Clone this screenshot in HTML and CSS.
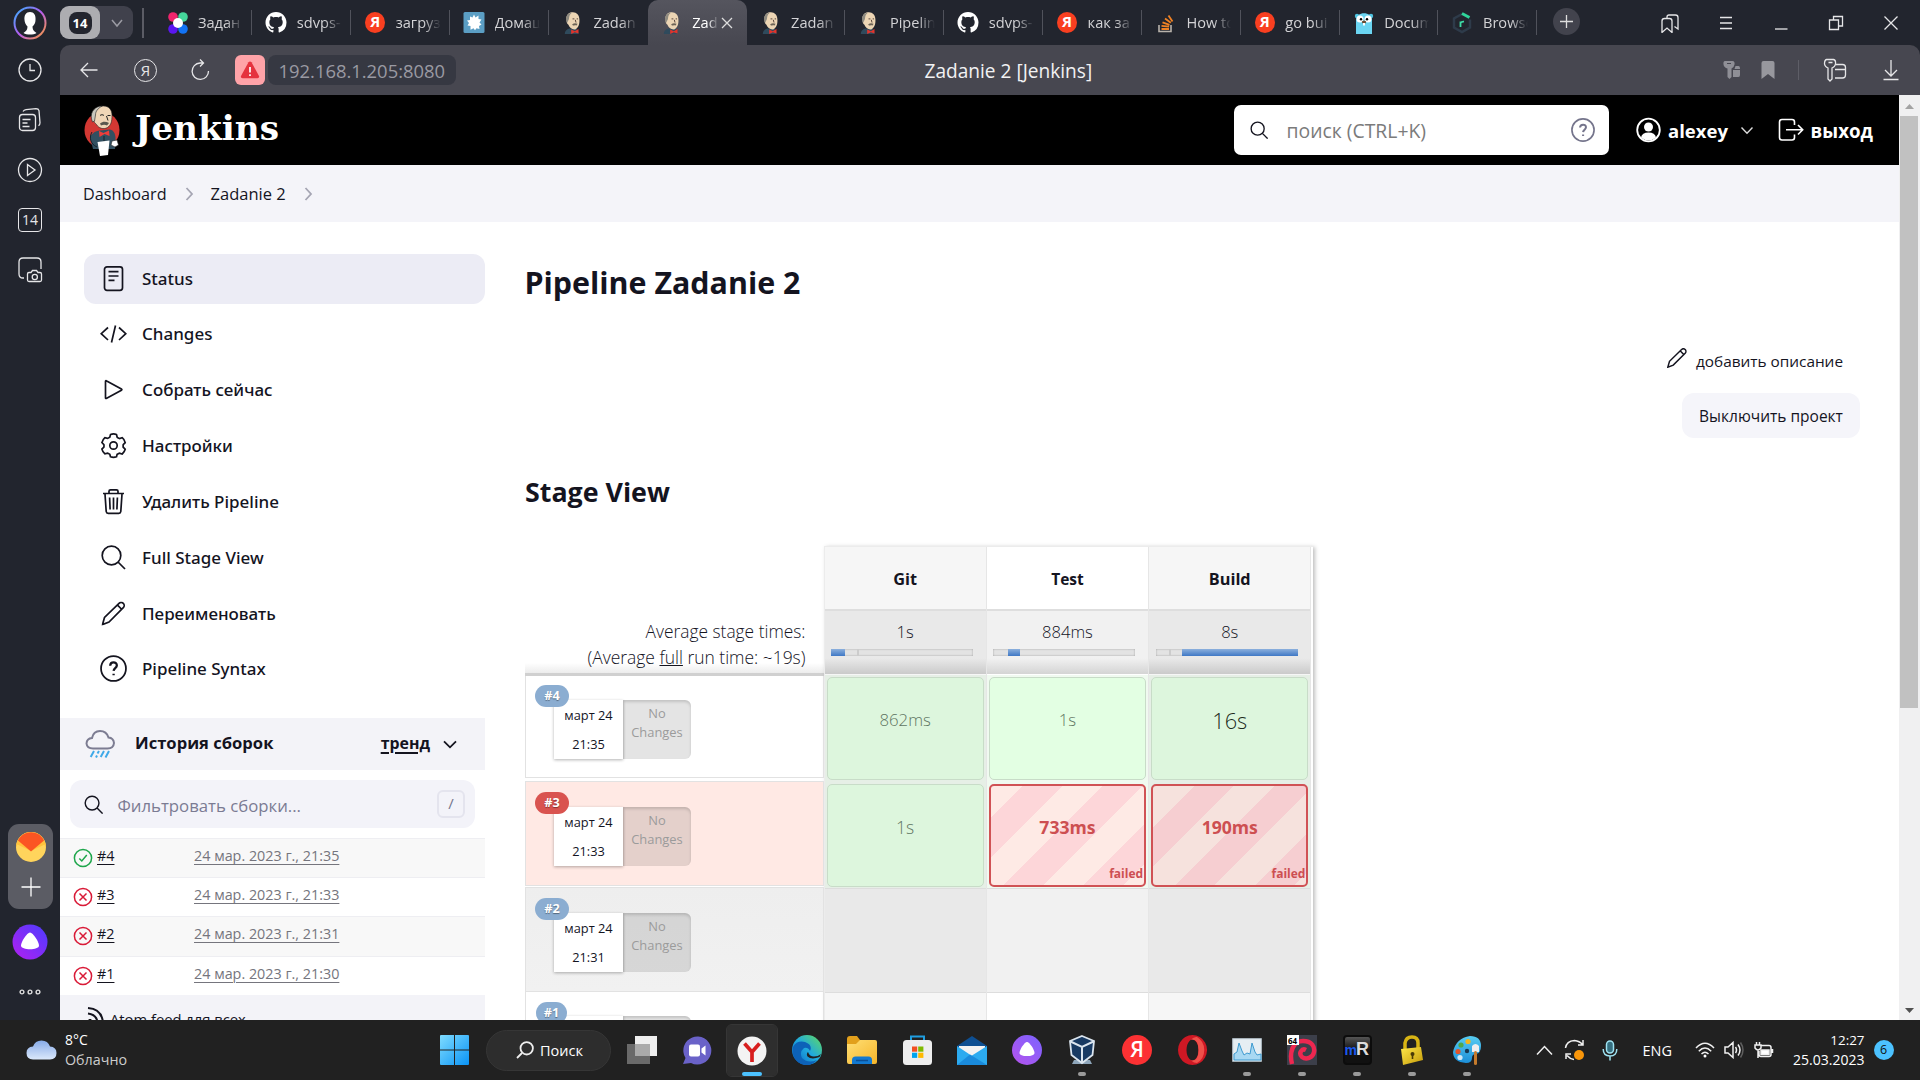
FILE: index.html
```
<!DOCTYPE html>
<html lang="ru">
<head>
<meta charset="utf-8">
<title>Zadanie 2 [Jenkins]</title>
<link rel="stylesheet" href="styles.css">
</head>
<body>
<svg class="defs" aria-hidden="true">
  <defs>
    <linearGradient id="ring" x1="0" y1="0" x2="1" y2="1"><stop offset="0" stop-color="#2fb4ff"/><stop offset=".5" stop-color="#b45cf0"/><stop offset="1" stop-color="#ff9d2f"/></linearGradient>
    <linearGradient id="win" x1="0" y1="0" x2="1" y2="1"><stop offset="0" stop-color="#7fdcff"/><stop offset="1" stop-color="#0a93f5"/></linearGradient>
    <linearGradient id="purple" x1="1" y1="0" x2="0" y2="1"><stop offset="0" stop-color="#4b3cff"/><stop offset="1" stop-color="#b41ff0"/></linearGradient>
    <linearGradient id="alice" x1="1" y1="0" x2="0" y2="1"><stop offset="0" stop-color="#7a63ff"/><stop offset="1" stop-color="#b653ec"/></linearGradient>
    <linearGradient id="cloud" x1="0" y1="0" x2="0" y2="1"><stop offset="0" stop-color="#87abe8"/><stop offset="1" stop-color="#dbe8fb"/></linearGradient>
    <linearGradient id="edge" x1="0" y1="1" x2="1" y2="0"><stop offset="0" stop-color="#0b5fc0"/><stop offset=".5" stop-color="#1fa9df"/><stop offset="1" stop-color="#63dc5c"/></linearGradient>
    <linearGradient id="folder" x1="0" y1="0" x2="1" y2="1"><stop offset="0" stop-color="#ffdf75"/><stop offset="1" stop-color="#f5b52a"/></linearGradient>
    <linearGradient id="paint" x1="0" y1="0" x2="0" y2="1"><stop offset="0" stop-color="#58cdf2"/><stop offset="1" stop-color="#1c8fd8"/></linearGradient>
    <linearGradient id="gold" x1="0" y1="0" x2="1" y2="1"><stop offset="0" stop-color="#ffe84a"/><stop offset="1" stop-color="#c49a08"/></linearGradient>
    <symbol id="butler" viewBox="0 0 20 24">
      <path d="M1 24c0-3 2-5 5-6h7c2 1 3 2 3 6z" fill="#2f4a5c"/>
      <path d="M3 8C2 3 6 0 10 .3c4 .2 7 3 7 8 .3 5-1 9-4.500 10.700C9 19.500 6 17 5 14 3 13 3 10 3 8z" fill="#ecd5b4"/>
      <path d="M3.500 12C1 7 3 1 9 .5 5.500 3 6 6 5.500 8z" fill="#8d8a80"/>
      <path d="M9.500 7.500h2M14 7.500h1.500M12.500 8.500l.8 3" stroke="#4d3a32" fill="none"/>
      <path d="M9 13.500c2-1.700 4-1.500 6-.7l-1 2c-1.500-.8-3-.3-4 0z" fill="#6d6457"/>
      <path d="M8 19l4 2 4-2.500v5L12 22l-4 2z" fill="#e0342c"/>
    </symbol>
    <symbol id="octocat" viewBox="0 0 16 16"><path fill="#fff" d="M8 0C3.580 0 0 3.580 0 8c0 3.540 2.290 6.530 5.470 7.590.4.070.55-.17.55-.38 0-.19-.01-.82-.01-1.490-2.010.37-2.530-.49-2.690-.94-.09-.23-.48-.94-.82-1.130-.28-.15-.68-.52-.01-.53.63-.01 1.080.58 1.230.82.72 1.210 1.870.87 2.330.66.070-.52.28-.87.51-1.070-1.780-.2-3.640-.89-3.640-3.950 0-.87.31-1.590.82-2.150-.08-.2-.36-1.020.08-2.120 0 0 .67-.21 2.200.82.64-.18 1.320-.27 2-.27s1.360.09 2 .27c1.530-1.040 2.200-.82 2.200-.82.44 1.100.16 1.920.08 2.120.51.56.82 1.270.82 2.150 0 3.070-1.870 3.750-3.650 3.950.29.25.54.73.54 1.480 0 1.070-.01 1.930-.01 2.200 0 .21.15.46.55.38A8.010 8.010 0 0 0 16 8c0-4.420-3.580-8-8-8z"/></symbol>
    <symbol id="mag" viewBox="0 0 24 24"><circle cx="10.200" cy="10.200" r="8.700"/><path d="M16.500 16.500l7 7"/></symbol>
    <symbol id="pencil" viewBox="0 0 24 24"><path d="M1 23l2-7L17.500 1.900a3 3 0 0 1 4.300 4.300L7.500 20.500zM16 3.600l4.400 4.400"/></symbol>
    <symbol id="help" viewBox="0 0 26 26"><circle cx="13" cy="13" r="12"/><path d="M9.800 10.300c.2-4.200 6.500-4 6.400-.2 0 2.500-3 2.600-3.100 5.200M13.100 18v1.600" stroke-width="2.200"/></symbol>
    <symbol id="fail" viewBox="0 0 20 20"><circle cx="10" cy="10" r="8.600"/><path d="M6.500 6.500l7 7M13.500 6.500l-7 7"/></symbol>
  </defs>
</svg>

<header class="tabbar">
  <svg class="profile" width="34" height="34" viewBox="0 0 34 34"><circle cx="17" cy="17" r="15.500" fill="none" stroke="url(#ring)" stroke-width="2"/><path d="M17 6c-4 0-6 3-5.500 8 .2 3 1.500 5 3 6.500-.2 4-1.500 4.500-4 6.500 3 2 10 2 13 0-2.500-2-3.800-2.500-4-6.500 1.800-1.500 3-3.500 3-6.500C23 9 21 6 17 6z" fill="#fff"/></svg>
  <div class="group"><span class="group-n"><b>14</b></span><svg width="14" height="10" viewBox="0 0 14 10"><path d="M2 2l5 6 5-6" fill="none" stroke="#9b9ba3" stroke-width="1.500"/></svg></div>
  <i class="bar"></i>
  <nav class="tabs">
    <div class="tab"><svg width="22" height="22" viewBox="0 0 22 22"><circle cx="6" cy="5" r="4.800" fill="#f0246c"/><circle cx="16" cy="5" r="4.800" fill="#45d69b"/><circle cx="6" cy="17" r="4.800" fill="#5b16f0"/><circle cx="16" cy="17" r="4.800" fill="#1273f5"/><circle cx="11" cy="11" r="5" fill="#fff"/></svg><span>Задан</span></div>
    <div class="tab"><svg width="21" height="21"><use href="#octocat"/></svg><span>sdvps-</span></div>
    <div class="tab"><b class="ya">Я</b><span>загруз</span></div>
    <div class="tab"><svg width="21" height="21" viewBox="0 0 21 21"><rect width="21" height="21" rx="1.500" fill="#5b9ec4"/><path d="M10.500 2.500l1.500 3 3-2v3.500l3 .5-2 3 2 2-2.500 1.500.5 3-3-.8-1.500 2-1.500-2-3 1.500V14l-3-.5 1.500-2.500-2-2.500 3-.5V4.500l2.500 1z" fill="#fff"/></svg><span>Домаш</span></div>
    <div class="tab nosep"><svg width="18" height="22"><use href="#butler"/></svg><span>Zadan</span></div>
    <div class="tab active"><svg width="18" height="22"><use href="#butler"/></svg><span class="short">Zad</span><svg class="close" width="12" height="12" viewBox="0 0 12 12"><path d="M1 1l10 10M11 1L1 11" stroke="#ddd" stroke-width="1.300"/></svg></div>
    <div class="tab"><svg width="18" height="22"><use href="#butler"/></svg><span>Zadan</span></div>
    <div class="tab"><svg width="18" height="22"><use href="#butler"/></svg><span>Pipelin</span></div>
    <div class="tab"><svg width="21" height="21"><use href="#octocat"/></svg><span>sdvps-</span></div>
    <div class="tab"><b class="ya">Я</b><span>как за</span></div>
    <div class="tab"><svg width="18" height="20" viewBox="0 0 18 20"><path d="M2 12v6.500h12V12" fill="none" stroke="#b8b2ab" stroke-width="1.600"/><path d="M4.500 16h7.500M4.500 12.800l7.600.8M5.500 9.300l7 2.500M8 5.500l5.800 4.300M11.500 2.500l4 6" stroke="#f08224" stroke-width="1.800"/></svg><span>How to</span></div>
    <div class="tab"><b class="ya">Я</b><span>go bui</span></div>
    <div class="tab"><svg width="20" height="22" viewBox="0 0 20 22"><circle cx="3" cy="4" r="2.200" fill="#4fc3e0"/><circle cx="17" cy="4" r="2.200" fill="#4fc3e0"/><path d="M2 22V8c0-9 16-9 16 0v14z" fill="#6bd5f2"/><circle cx="6" cy="7" r="3.500" fill="#fff"/><circle cx="14" cy="7" r="3.500" fill="#fff"/><circle cx="7" cy="7.300" r="1.200"/><circle cx="13" cy="7.300" r="1.200"/><ellipse cx="10" cy="10" rx="2.200" ry="1.500" fill="#6b4a2f"/><path d="M9 11h2v2.500H9z" fill="#fff"/></svg><span>Docum</span></div>
    <div class="tab"><svg width="20" height="22" viewBox="0 0 20 22"><path d="M10 2L2 6.500v9L10 20l8-4.500v-8" fill="none" stroke="#2e3b4a" stroke-width="2.500"/><path d="M10 1.500l7.500 4" stroke="#2fd49a" stroke-width="3"/><path d="M8.500 15V9.500M8.500 11c1-1.500 2-1.500 3.500-1.300" fill="none" stroke="#3ddba6" stroke-width="1.800"/></svg><span>Browse</span></div>
  </nav>
  <div class="plus"><svg width="15" height="15" viewBox="0 0 15 15"><path d="M7.500 1v13M1 7.500h13" stroke="#ddd" stroke-width="1.300"/></svg></div>
  <div class="winctl">
    <svg width="20" height="20" viewBox="0 0 20 20"><path d="M2 8q0-2.500 2.500-2.500h5Q12 5.500 12 8v11.500L7 15l-5 4.500zM7 5.500V4q0-2 2-2h6.500q2.500 0 2.500 2.500V16l-3.500-2.500"/></svg>
    <svg width="20" height="20" viewBox="0 0 20 20"><path d="M4 4.500h12M4 10h12M4 15.500h12"/></svg>
    <svg width="20" height="20" viewBox="0 0 20 20"><path d="M4 16h12.500"/></svg>
    <svg width="20" height="20" viewBox="0 0 20 20"><path d="M3.500 7h9v9.500h-9zM7.500 7V3.500h9v9.500h-4"/></svg>
    <svg width="20" height="20" viewBox="0 0 20 20"><path d="M3.500 3.500l13 13M16.500 3.500l-13 13"/></svg>
  </div>
</header>

<div class="middle">
  <aside class="side">
    <div class="side-top">
      <svg width="26" height="26" viewBox="0 0 26 26"><circle cx="13" cy="13" r="11"/><path d="M13 7v6.500h5"/></svg>
      <svg width="26" height="26" viewBox="0 0 26 26"><rect x="2.500" y="7.500" width="16" height="16" rx="3"/><path d="M6 4.500q1-1.500 3-1.800l10-1q2.500 0 3 2l1 12q0 2-1.500 3M5.500 12.500h8M5.500 16h5M5.500 19.500h7"/></svg>
      <svg width="26" height="26" viewBox="0 0 26 26"><circle cx="13" cy="13" r="11.500"/><path d="M10.500 7.500v11l7.500-5.500z"/></svg>
      <span class="n14">14</span>
      <svg width="26" height="26" viewBox="0 0 26 26"><path d="M7 21h-1q-4 0-4-4V5q0-4 4-4h14q4 0 4 4v7M10.500 17q0-1.500 1.500-1.500h2l1.500-2h4l1.500 2h2q1.500 0 1.500 1.500v6q0 1.500-1.500 1.500H12q-1.500 0-1.500-1.500z"/><circle cx="17.800" cy="20" r="2.600"/></svg>
    </div>
    <div class="side-bot">
      <div class="pill">
        <svg width="30" height="30" viewBox="0 0 30 30"><circle cx="15" cy="15" r="15" fill="#ffd45c"/><path d="M0 15a15 15 0 0 1 30 0q-.3 0-1.500-2.500L15 19 1.500 12.500z" fill="#ffc23c"/><path d="M2 8.500C7-2.500 23-2.500 28 8.500L15 19.500z" fill="#fb5523"/></svg>
        <svg width="20" height="20" viewBox="0 0 20 20"><path d="M10 .5v19M.5 10h19" stroke="#fff" stroke-width="1.300"/></svg>
      </div>
      <svg width="36" height="36" viewBox="0 0 36 36"><circle cx="18" cy="18" r="17.500" fill="url(#purple)"/><path d="M18 8.500c3 0 9 9.500 9 13 0 5-18 5-18 0 0-3.500 6-13 9-13z" fill="#fff"/></svg>
      <svg class="dots" width="22" height="6" viewBox="0 0 22 6"><circle cx="3" cy="3" r="1.900"/><circle cx="11" cy="3" r="1.900"/><circle cx="19" cy="3" r="1.900"/></svg>
    </div>
  </aside>

  <div class="browser">
    <div class="toolbar">
      <div class="tl">
        <svg width="18" height="16" viewBox="0 0 18 16"><path d="M17.500 8H1M8 1L1 8l7 7"/></svg>
        <b class="ya-o">Я</b>
        <svg width="20" height="22" viewBox="0 0 20 22"><path d="M10 .5l3.500 3.500L10 7.500M13 4h-3A8.200 8.200 0 1 0 18.500 12"/></svg>
      </div>
      <div class="warn"><svg width="20" height="18" viewBox="0 0 20 18"><path d="M8.500 1.300q1.500-1.800 3 0L19 15q.6 2-1.500 2.200h-15Q.4 17 1 15z" fill="#e5323e"/><path d="M10 6v5.500M10 13.300v1.700" stroke="#fff" stroke-width="1.700"/></svg></div>
      <div class="url">192.168.1.205:8080</div>
      <div class="ptitle">Zadanie 2 [Jenkins]</div>
      <div class="tr">
        <svg width="18" height="20" viewBox="0 0 18 20"><path d="M2 1h7.500q2.500 0 2 3.500Q11 7.500 8.500 8.500V17L6.500 19l-2-2V8.500Q1 7.500.5 4.500 0 1 2 1zM12.500 6h3q1.500 0 1.500 3h-5.500zM10 10h7v5q0 2-1.500 2H10z" fill="#8f8f96"/><path d="M4 3.500h4" stroke="#474750"/></svg>
        <svg width="14" height="20" viewBox="0 0 14 20"><path d="M.5 19V3Q.5 1 2.500 1h9q2 0 2 2v16L7 14z" fill="#97979d"/></svg>
        <i></i>
        <svg class="key" width="24" height="24" viewBox="0 0 24 24"><path d="M3.500 1.500h7Q13 2 12.500 6q-.5 3-3.500 4v11L7 23l-2-2V10Q2 9 1.500 6 1.500 2 3.500 1.500zM5.500 4.500h4M13 6.500h6.500q3 0 3 3V17q0 3-3 3H12M12 11.500h10.500"/></svg>
        <svg class="dl" width="16" height="22" viewBox="0 0 16 22"><path d="M8 1v16M2 11l6 6 6-6M.5 20.500h15"/></svg>
      </div>
    </div>

    <div class="viewport">
      <div class="page">
        <div class="jhead">
          <svg class="mascot" width="36" height="51" viewBox="0 0 36 51"><ellipse cx="18" cy="25" rx="17.500" ry="18" fill="#d33833"/><path d="M6 32c3-5 6-6 10-6.500l10-1c4 1 5 4 5.500 8L31 44H9z" fill="#335061"/><path d="M9 9.500C10 4 15 1 19.500 1 25 1 28 5 28 10c0 7-1 10-4.500 12.500-4 2.500-9 .5-11-3-3-2-3.500-6-3.500-10z" fill="#f0d6b7" stroke="#222" stroke-width=".6"/><path d="M7.500 14C6 6 12 1 18 1c-4 2.500-6.500 5-6.500 9L10.500 16l-2 1z" fill="#c9c7bd" stroke="#222" stroke-width=".6"/><path d="M16 10.500c1-1 3-1 4 0M23.500 10.500h3M22.500 11l1.500 4.500" stroke="#222" fill="none"/><path d="M16 18.500c3-2.500 6-2 9-.5l-2 2.500c-2-1-4-.8-6 0z" fill="#5b584e"/><path d="M15 26l4.500 2L25 25.500l.5 5.500-5-2-5 3z" fill="#ef3d3a"/><path d="M13.500 37l12-1.500-1.500 14.500-8 1z" fill="#fff"/><path d="M28 36l5-1 1.500 5-3.500 2-4-2z" fill="#fff" stroke="#222" stroke-width=".6"/><path d="M8 27c-3 5-2 12 5 15M20 31v5" stroke="#16222a" fill="none"/></svg>
          <span class="wordmark">Jenkins</span>
          <div class="search"><svg class="ln" width="18" height="18"><use href="#mag"/></svg><span>поиск (CTRL+K)</span><svg class="ln hq" width="24" height="24"><use href="#help"/></svg></div>
          <svg class="user" width="25" height="26" viewBox="0 0 25 26"><circle cx="12.500" cy="13" r="11.300" fill="none" stroke="#fff" stroke-width="1.800"/><circle cx="12.500" cy="10" r="4.500" fill="#fff"/><path d="M5 20.500q1-5 7.500-5t7.500 5q-7.500 6-15 0z" fill="#fff"/></svg>
          <b class="uname">alexey</b>
          <svg class="uchev" width="14" height="9" viewBox="0 0 14 9"><path d="M1.500 1.500L7 7.200l5.500-5.700" fill="none" stroke="#ddd" stroke-width="1.400"/></svg>
          <svg class="exit" width="26" height="24" viewBox="0 0 26 24"><path d="M16.500 7V4q0-2.500-2.500-2.500H4Q1.500 1.500 1.500 4v15.500Q1.500 22 4 22h10q2.500 0 2.500-2.500v-3M8 11.700h16.500M20 7l4.700 4.700L20 16.500" fill="none" stroke="#fff" stroke-width="1.600"/></svg>
          <b class="logout">выход</b>
        </div>

        <div class="crumbs"><span>Dashboard</span><svg width="9" height="14" viewBox="0 0 9 14"><path d="M1.500 1l5.500 6-5.500 6"/></svg><span class="c2">Zadanie 2</span><svg width="9" height="14" viewBox="0 0 9 14"><path d="M1.500 1l5.500 6-5.500 6"/></svg></div>

        <div class="cols">
          <div class="left">
            <nav class="menu">
              <a class="on"><svg width="27" height="27" viewBox="0 0 27 27"><rect x="4.500" y="1.800" width="18" height="23.500" rx="2.500"/><path d="M8.500 6.700h10M8.500 11h10M8.500 15.300h6"/></svg>Status</a>
              <a><svg width="27" height="27" viewBox="0 0 27 27"><path d="M8 7.500L1.200 13.700 8 20M19 7.500l6.800 6.200L19 20M15.500 5.500l-4 17"/></svg>Changes</a>
              <a><svg width="27" height="27" viewBox="0 0 27 27"><path d="M5.500 5.500q0-1.300 1.200-.6l14.700 8q1 .7 0 1.400l-14.700 8q-1.200.6-1.200-.6z"/></svg>Собрать сейчас</a>
              <a><svg width="27" height="27" viewBox="0 0 27 27"><circle cx="13.500" cy="13.500" r="3.700"/><path d="M10.500 2.500q3-1.300 6 0l.7 2.800q1 .8 2.300 1.200l2.700-.8q2.500 2 3 5l-2 2q-.2 1.600 0 2.500l2 2q-.8 3-3 4.800l-2.800-.8q-1 .8-2.300 1.200l-.6 2.400q-3 1-6 0l-.7-2.500-2.200-1.200-2.700.8q-2.300-2-3-4.800l2-2q.2-1.300 0-2.500l-2-2q.7-3 3-5l2.700.8 2.200-1.200z"/></svg>Настройки</a>
              <a><svg width="27" height="27" viewBox="0 0 27 27"><path d="M3 5.500h21M9 5V3.300q0-1.500 1.500-1.500h6q1.500 0 1.500 1.500V5M5 6l1.200 17.500q.2 1.800 2 1.800h10.600q1.800 0 2-1.800L22 6M13.500 9.500v12M9.600 9.500l.5 12M17.400 9.500l-.5 12"/></svg>Удалить Pipeline</a>
              <a><svg width="27" height="27" viewBox="0 0 27 27"><circle cx="11.500" cy="11.500" r="9.300"/><path d="M18 18l7 7"/></svg>Full Stage View</a>
              <a><svg width="27" height="27" viewBox="-1.500 -1.500 27 27"><use href="#pencil" width="24" height="24"/></svg>Переименовать</a>
              <a><svg width="27" height="27"><use href="#help"/></svg>Pipeline Syntax</a>
            </nav>

            <div class="hist">
              <svg width="30" height="30" viewBox="0 0 30 30"><path d="M8 19.500q-6 0-6.500-5 .3-5 5.500-5.500Q8.500 2 15 2t8.500 6.500q5 .5 5.500 5.500-.5 5.500-6.500 5.500z" fill="none" stroke="#7c7c92" stroke-width="2"/><path d="M9 22l-3.300 6M14 22l-1.500 2.500M12 26.500l-1 2M19 22l-3.300 6M24 22l-3.500 6.500" stroke="#3fa9e8" stroke-width="2"/></svg>
              <b>История сборок</b><b class="trend">тренд</b>
              <svg width="14" height="9" viewBox="0 0 14 9"><path d="M1 1.300l6 6 6-6" fill="none" stroke="#14141f" stroke-width="1.800"/></svg>
            </div>
            <div class="filter"><svg class="ln" width="19" height="19"><use href="#mag"/></svg><span>Фильтровать сборки...</span><i>/</i></div>
            <div class="builds">
              <div><svg class="ok" width="20" height="20" viewBox="0 0 20 20"><circle cx="10" cy="10" r="8.600"/><path d="M6.300 10.500l2.500 2.500 5-6"/></svg><u>#4</u><u class="d">24 мар. 2023 г., 21:35</u></div>
              <div><svg class="bad" width="20" height="20"><use href="#fail"/></svg><u>#3</u><u class="d">24 мар. 2023 г., 21:33</u></div>
              <div><svg class="bad" width="20" height="20"><use href="#fail"/></svg><u>#2</u><u class="d">24 мар. 2023 г., 21:31</u></div>
              <div><svg class="bad" width="20" height="20"><use href="#fail"/></svg><u>#1</u><u class="d">24 мар. 2023 г., 21:30</u></div>
            </div>
            <div class="atom"><svg width="19" height="19" viewBox="0 0 19 19"><path d="M2 2q14 1 15 15M2 7.500q9 1 9.500 9.500" fill="none" stroke="#14141f" stroke-width="2"/><circle cx="4" cy="15" r="2"/></svg><span>Atom feed для всех</span></div>
          </div>

          <main class="main">
            <h1>Pipeline Zadanie 2</h1>
            <div class="actions">
              <div class="desc"><svg class="ln" width="20" height="20"><use href="#pencil"/></svg><span>добавить описание</span></div>
              <div class="btn">Выключить проект</div>
            </div>
            <h2>Stage View</h2>
            <div class="stage">
              <div class="runs">
                <div class="avg"><span class="a1">Average stage times:</span><span class="a2">(Average <u>full</u> run time: ~19s)</span></div>
                <div class="run r1"><em>#4</em><div class="card"><span>март 24</span><span>21:35</span></div><div class="nc">No<br>Changes</div></div>
                <div class="run r2"><em class="red">#3</em><div class="card"><span>март 24</span><span>21:33</span></div><div class="nc">No<br>Changes</div></div>
                <div class="run r3"><em>#2</em><div class="card"><span>март 24</span><span>21:31</span></div><div class="nc">No<br>Changes</div></div>
                <div class="run r4"><em>#1</em><div class="card"></div><div class="nc"></div></div>
              </div>
              <div class="grid">
                <div class="col alt">
                  <div class="th">Git</div>
                  <div class="tm">1s<div class="prog"><i style="left:0;width:14px"></i><s style="left:26px"></s></div></div>
                  <div class="cell"><div class="ok">862ms</div></div>
                  <div class="cell"><div class="ok big">1s</div></div>
                  <div class="empty"></div><div class="rest"></div>
                </div>
                <div class="col">
                  <div class="th test">Test</div>
                  <div class="tm">884ms<div class="prog"><i style="left:15px;width:12px"></i></div></div>
                  <div class="cell"><div class="ok">1s</div></div>
                  <div class="cell"><div class="ko">733ms<small>failed</small></div></div>
                  <div class="empty"></div><div class="rest"></div>
                </div>
                <div class="col alt">
                  <div class="th">Build</div>
                  <div class="tm">8s<div class="prog"><s style="left:13px"></s><i style="left:26px;width:116px"></i></div></div>
                  <div class="cell"><div class="ok huge">16s</div></div>
                  <div class="cell"><div class="ko b">190ms<small>failed</small></div></div>
                  <div class="empty"></div><div class="rest"></div>
                </div>
              </div>
            </div>
          </main>
        </div>
      </div>
      <div class="scroll">
        <svg width="21" height="21" viewBox="0 0 21 21"><path d="M6 14l4.500-5 4.500 5z" fill="#a3a3a3"/></svg>
        <div class="thumb"></div>
        <svg width="21" height="20" viewBox="0 0 21 20"><path d="M6 8l4.500 5L15 8z" fill="#505050"/></svg>
      </div>
    </div>
  </div>
</div>

<footer class="taskbar">
  <svg class="wcloud" width="31" height="20" viewBox="0 0 31 20"><path d="M7 19.500Q.5 19 .5 13T7 6.500Q9 .5 15.500.5T24 6.500q6.500.5 6.500 6.500T24 19.500z" fill="url(#cloud)"/></svg>
  <div class="weather"><span>8°C</span><span class="w2">Облачно</span></div>
  <svg class="start" width="29" height="30" viewBox="0 0 29 30"><path d="M0 1q0-1 1-1h13v14.500H0zM15 0h13q1 0 1 1v13.500H15zM0 15.500h14V30H1q-1 0-1-1zM15 15.500h14V29q0 1-1 1H15z" fill="url(#win)"/></svg>
  <div class="tsearch"><svg width="18" height="18" viewBox="0 0 18 18"><circle cx="10.700" cy="7.300" r="6.200"/><path d="M6 12l-5 5"/></svg><span>Поиск</span></div>
  <div class="apps">
    <div><svg width="30" height="30" viewBox="0 0 30 30"><rect x="8" y="1" width="22" height="20" fill="#eee"/><rect y="9" width="23" height="20" fill="#777" opacity=".85"/><rect x="8" y="9" width="15" height="12" fill="#aaa"/></svg></div>
    <div><svg width="30" height="30" viewBox="0 0 30 30"><path d="M1 29l2.500-6A14 14 0 1 1 15 29.500q-3 0-6-1.500z" fill="#6a62c8"/><rect x="7" y="9.500" width="11" height="12" rx="2" fill="#fff"/><path d="M19.500 13.500l4-3v10l-4-3z" fill="#fff"/></svg></div>
    <div class="cur"><svg width="30" height="30" viewBox="0 0 30 30"><circle cx="15" cy="15" r="14.500" fill="#f3f3f3"/><path d="M7.500 7.500L15 16l7.500-8.500M15 15.500V26" fill="none" stroke="#d81e1e" stroke-width="3.700"/></svg><i></i></div>
    <div><svg width="30" height="30" viewBox="0 0 30 30"><circle cx="15" cy="15" r="15" fill="url(#edge)"/><path d="M1 12Q5 5 13 7q8 3 5 9-2-4-6-3-5 4-2 10 6 6 15 2-7 8-16 4Q-1 24 1 12z" fill="#0d62b8"/><path d="M16 17q1.500 4.500 6 4.500 4 0 7-2.500l-1.500 3q-8 3-12-.5-1.500-2.500.5-4.500z" fill="#212121"/></svg></div>
    <div><svg width="30" height="28" viewBox="0 0 30 28"><path d="M0 3Q0 0 3 0h7l3 4v6H0z" fill="#e2a01c"/><path d="M0 8h9l4-4h15q2 0 2 2v20q0 2-2 2H2q-2 0-2-2z" fill="url(#folder)"/><path d="M5 28v-4q0-3.500 3.500-3.500h13q3.500 0 3.500 3.500v4z" fill="#1379d0"/><path d="M9 24.500h12" stroke="#0b4f97" stroke-width="1.500"/></svg></div>
    <div><svg width="29" height="30" viewBox="0 0 29 30"><path d="M8 7V1.500h13V7" fill="none" stroke="#1f9ee0" stroke-width="2"/><rect y="5" width="29" height="25" rx="3.500" fill="#eee"/><path d="M9 11.500h5.200v5.200H9z" fill="#f25022"/><path d="M15.200 11.500h5.200v5.200h-5.200z" fill="#7fba00"/><path d="M9 17.700h5.200v5.200H9z" fill="#00a4ef"/><path d="M15.200 17.700h5.200v5.200h-5.200z" fill="#ffb900"/></svg></div>
    <div><svg width="30" height="29" viewBox="0 0 30 29"><path d="M0 10L15 0l15 10v5H0z" fill="#0e4f92"/><path d="M2 10h26v7l-13 5-13-5z" fill="#f2f2f2"/><path d="M0 10l15 10-15 9zM30 10v19H0z" fill="#2cabf0"/><path d="M0 29h30L13 18.500z" fill="#1a8bdc"/></svg></div>
    <div><svg width="30" height="30" viewBox="0 0 36 36"><circle cx="18" cy="18" r="18" fill="url(#alice)"/><path d="M18 8.500c3 0 9 9.500 9 13 0 5-18 5-18 0 0-3.500 6-13 9-13z" fill="#fff"/></svg></div>
    <div><svg width="26" height="30" viewBox="0 0 26 30"><path d="M5 25h16l2 4H3z" fill="#8ea6bb"/><path d="M13 1l12 5-1.500 14L13 28 2.500 20 1 6z" fill="#183a63" stroke="#dbe5ef" stroke-width="1.800"/><path d="M1.500 6.500L13 12l11.500-5.500M13 12v15" fill="none" stroke="#dbe5ef" stroke-width="2"/></svg><i></i></div>
    <div><b class="ya t">Я</b></div>
    <div><svg width="29" height="30" viewBox="0 0 29 30"><path fill-rule="evenodd" d="M14.500 0a14.500 15 0 1 0 .01 0zM14.500 4.500a6 10.500 0 1 1-.01 0z" fill="#cf1824"/><path d="M19 2a14.500 15 0 0 1 0 26q-3 0-6-2.500 7.500 1 7.500-10.500T13 4.500Q16 1.500 19 2z" fill="#f0504a"/></svg></div>
    <div><svg width="30" height="24" viewBox="0 0 30 24"><rect x=".7" y=".7" width="28.600" height="22.600" fill="#e6eef3" stroke="#b8c6cf"/><path d="M2 16l3-2 2-9 3 8 2 4 3-2 3 1 2-11 3 9 2 3 4-1v6H2z" fill="#a8d8f2" stroke="#3f9bd0"/></svg><i></i></div>
    <div><svg width="30" height="30" viewBox="0 0 30 30"><rect width="30" height="30" fill="#3c3f4a"/><path d="M5 29C2 17 6 6 16 6c9 0 12 6 11 11-1 6-8 8-12 5-4-4 0-9 4-7" fill="none" stroke="#ee2750" stroke-width="4.500"/><rect width="12" height="10" fill="#fff"/><text x="1" y="8.500" font-family="Open Sans, sans-serif" font-size="8" font-weight="700">64</text></svg><i></i></div>
    <div><span class="mr"><b>m</b>R</span><i></i></div>
    <div><svg width="24" height="30" viewBox="0 0 24 30"><path d="M5 15V8q1-6 7-6t6 6v6" fill="none" stroke="#d8b414" stroke-width="3.500"/><path d="M1 14l20-2 2 13-20 5z" fill="url(#gold)"/><circle cx="12.500" cy="19" r="2" fill="#4a3a08"/><path d="M12.500 19v5" stroke="#4a3a08" stroke-width="1.600"/></svg><i></i></div>
    <div><svg width="29" height="30" viewBox="0 0 29 30"><path d="M17 1q11 0 11 10 0 7-5 8-4 0-4 4 0 5-6 5Q0 27 0 17 3 3 17 1z" fill="url(#paint)"/><circle cx="14" cy="16" r="2.200" fill="#173a55"/><circle cx="8" cy="10" r="2.600" fill="#4ea84a"/><circle cx="15" cy="6.500" r="2.600" fill="#f2b51d"/><circle cx="5" cy="16.500" r="2.600" fill="#e2552a"/><circle cx="7" cy="22.500" r="2.600" fill="#cfe9f7"/><path d="M19 17v-6q3.500-4 7 0v6z" fill="#eee"/><rect x="21" y="16" width="3" height="14" rx="1.500" fill="#c47a2c"/></svg><i></i></div>
  </div>
  <div class="tray">
    <svg class="w" width="17" height="11" viewBox="0 0 17 11"><path d="M1 9.500l7.500-8 7.500 8"/></svg>
    <svg class="w sync" width="22" height="22" viewBox="0 0 22 22"><path d="M1.500 9q1-7 9-7.500 5 .5 8 4M19 1v5h-5M2 20v-5h5M3 16.500q3 3.500 7 4"/><circle cx="15" cy="16" r="5" fill="#f9960a" stroke="none"/></svg>
    <svg class="mic" width="16" height="21" viewBox="0 0 16 21"><rect x="4.500" y="1" width="7" height="12" rx="3.500" fill="#356f80"/><path d="M1.200 9q0 7 6.800 7t6.800-7M8 16v4.500"/></svg>
    <span class="eng">ENG</span>
    <svg class="w wifi" width="20" height="16" viewBox="0 0 20 16"><path d="M1 6q9-9.500 18 0M3.800 9.300q6.200-6.500 12.400 0M6.500 12q3.500-3.500 7 0"/><circle cx="10" cy="14" r="1.500" fill="#fff" stroke="none"/></svg>
    <svg class="w vol" width="21" height="18" viewBox="0 0 21 18"><path d="M1 6h3l5-4.500v15L4 12H1zM11.500 6q2 3 0 6M14 3.500q4 5.500 0 11"/><path d="M16.500 1.500q5 7.500 0 15" opacity=".3"/></svg>
    <svg class="w bat" width="20" height="17" viewBox="0 0 20 17"><path d="M7 3.500h8q2 0 2 2v7q0 2-2 2H7q-2 0-2-2V9M18.500 7v4M1 3h6v3q-3 4-6 0zM2.500 3V0M5.500 3V0M4 8v8"/><path d="M7 8h8v4.500H7z" fill="#fff"/></svg>
    <div class="clock"><span class="c1">12:27</span><span class="c2">25.03.2023</span></div>
    <span class="six">6</span>
  </div>
</footer>
</body>
</html>
```
FILE: styles.css
```
* { box-sizing: border-box; }
body { margin: 0; width: 1920px; height: 1080px; overflow: hidden; display: flex; flex-direction: column; font-family: "Open Sans", "Noto Sans", sans-serif; color: #14141f; background: #22252e; white-space: nowrap; }
svg { display: block; flex: none; }
i, em, s { font-style: normal; text-decoration: none; }
.defs { position: absolute; width: 0; height: 0; }
.ln { fill: none; stroke: currentColor; stroke-width: 1.800; }

/* tab strip */
.tabbar { height: 45px; flex: none; display: flex; align-items: center; background: #22252e; }
.profile { margin-left: 13px; }
.group { margin-left: 13px; width: 73px; height: 33px; border-radius: 9px; background: #40414c; display: flex; align-items: center; gap: 10px; }
.group-n { width: 40px; height: 33px; border-radius: 9px; background: #adadb1; display: flex; align-items: center; justify-content: center; }
.group-n b { width: 23px; height: 22px; border-radius: 8px; background: #23252e; color: #fff; font-size: 13px; line-height: 22px; text-align: center; }
.bar { width: 2px; height: 30px; background: #5b5c65; margin-left: 9px; }
.tabs { display: flex; margin-left: 9.500px; height: 45px; }
.tab { width: 98.850px; height: 45px; display: flex; align-items: center; position: relative; padding-left: 13px; font-size: 14.600px; color: #d3d3d6; }
.tab > svg:first-child, .tab > .ya { width: 22px; }
.tab > span { margin-left: 9.500px; width: 46px; overflow: hidden; line-height: 24px; padding-bottom: 1px; -webkit-mask-image: linear-gradient(90deg, #000 60%, transparent 98%); mask-image: linear-gradient(90deg, #000 60%, transparent 98%); }
.tab::after { content: ""; position: absolute; right: 0; top: 10px; width: 1px; height: 25px; background: #50525b; }
.tab.nosep::after, .tab.active::after { display: none; }
.tab.active { background: linear-gradient(#55555e, #474750); border-radius: 10px 10px 0 0; color: #fff; }
.tab > .short { width: 27px; }
.close { margin-left: 2px; }
.ya { height: 20px; width: 20px; border-radius: 50%; background: #f93f20; color: #fff; font-size: 15px; line-height: 19px; text-align: center; }
.tab > .ya { width: 20px; margin: 0 1px; height: 21px; }
.plus { margin-left: 16px; width: 27px; height: 27px; border-radius: 50%; background: #42434d; display: grid; place-items: center; margin-bottom: 2px; }
.winctl { margin-left: 80px; display: flex; gap: 35.200px; }
.winctl svg, .side-top svg, .tl svg, .tr .key, .tr .dl { fill: none; stroke: #e6e6e8; stroke-width: 1.300; }

.middle { height: 975px; display: flex; overflow: hidden; }
.side { width: 60px; display: flex; flex-direction: column; align-items: center; justify-content: space-between; }
.side-top { display: flex; flex-direction: column; align-items: center; gap: 24px; padding-top: 12px; }
.n14 { width: 24px; height: 24px; margin: 1px 0; border: 1.500px solid #e6e6e8; border-radius: 4px; color: #e6e6e8; font-size: 14px; line-height: 21px; text-align: center; }
.side-bot { display: flex; flex-direction: column; align-items: center; }
.pill { width: 45px; height: 85px; border-radius: 11px; background: #5b5c64; display: flex; flex-direction: column; align-items: center; padding-top: 8px; gap: 15px; margin-left: 1px; }
.side-bot > svg { margin-top: 15px; }
.side-bot .dots { margin: 29px 0 25px; fill: none; stroke: #ddd; stroke-width: 1.400; }

.browser { width: 1860px; display: flex; flex-direction: column; }
.toolbar { height: 50px; flex: none; background: #474750; border-radius: 10px 10px 0 0; display: flex; align-items: center; position: relative; }
.tl { display: flex; align-items: center; width: 175px; padding-left: 20px; gap: 36px; }
.ya-o { width: 23px; height: 23px; border: 1.400px solid #e6e6e8; border-radius: 50%; color: #e6e6e8; font-weight: 400; font-size: 15px; line-height: 20px; text-align: center; }
.tl svg:last-child { margin-left: -3px; }
.warn { width: 30px; height: 30px; border-radius: 6px; background: #ffa3a8; display: grid; place-items: center; }
.url { width: 188px; height: 30px; margin-left: 3px; border-radius: 8px; background: #363842; color: #9a9aa2; font-size: 18.400px; line-height: 31px; padding-left: 10.500px; }
.ptitle { margin-left: 468.500px; font-size: 19.100px; color: #f2f2f3; line-height: 30px; padding-top: 1px; }
.tr { margin-left: auto; display: flex; align-items: center; padding-right: 21px; }
.tr svg + svg { margin-left: 20px; }
.tr i { width: 1px; height: 20px; background: #5e5e67; margin: 0 24px 0 23px; }
.tr .key + .dl { margin-left: 36px; }

.viewport { height: 925px; display: flex; background: #fff; overflow: hidden; }
.page { width: 1839px; overflow: hidden; height: 925px; }
.scroll { width: 21px; background: #f0f0f1; display: flex; flex-direction: column; }
.thumb { height: 592px; width: 18px; margin: 0 auto auto 1px; background: #c1c1c1; }

.jhead { height: 70px; background: #000; display: flex; align-items: center; color: #fff; }
.mascot { margin-left: 24px; }
.wordmark { width: 1099px; margin-left: 15px; font: 700 34.300px/60px "DejaVu Serif", serif; padding-bottom: 4px; }
.search { width: 375px; height: 50px; border-radius: 7px; background: #fff; display: flex; align-items: center; padding-left: 16px; color: #14141f; }
.search span { font-size: 19.360px; color: #7b7b7b; margin-left: 18.500px; }
.hq { margin-left: auto; margin-right: 14px; color: #75758c; }
.user { margin-left: 27px; }
.uname { font-size: 18.500px; margin-left: 7px; width: 60px; }
.uchev { margin-left: 12px; }
.exit { margin-left: 23.500px; }
.logout { font-size: 18.700px; margin-left: 7px; }

.crumbs { height: 57px; background: #f4f4f9; display: flex; align-items: center; padding-left: 23px; font-size: 16.200px; }
.crumbs svg { margin: 0 17px 0 18px; fill: none; stroke: #a5a5b3; stroke-width: 1.800; }
.crumbs .c2 { margin-left: 0; font-size: 16.500px; }

.cols { display: flex; height: 798px; }
.left { width: 425px; }
.menu { padding: 32px 0 0 24px; display: flex; flex-direction: column; gap: 5.850px; font: 500 17px "Noto Sans", sans-serif; height: 496px; }
.menu a { height: 50px; flex: none; border-radius: 12px; display: flex; align-items: center; gap: 15px; padding: 0 0 2px 16px; }
.menu svg { fill: none; stroke: #14141f; stroke-width: 1.700; }
.menu .on { background: #ececf5; }
.hist { height: 52px; background: #f3f3f8; display: flex; align-items: center; padding: 0 28px 0 25px; font-size: 16.600px; }
.hist b { margin: -3px 0 0 20px; }
.hist .trend { margin-left: auto; margin-right: 13px; text-decoration: underline; font-size: 15.900px; text-underline-offset: 3px; text-decoration-thickness: 1.500px; }
.filter { height: 48px; margin: 10px 10px 10px; border-radius: 12px; background: #f3f3f9; display: flex; align-items: center; padding: 0 10px 0 14px; font-size: 16.750px; font-weight: 500; }
.filter span { margin-left: 14.500px; color: #7b7b93; padding-top: 3px; }
.filter i { margin-left: auto; width: 28px; height: 28px; border: 2px solid #e4e4ee; border-radius: 6px; text-align: center; line-height: 23px; font-size: 15px; color: #75758c; }
.builds div { height: 39.200px; border-top: 1px solid #eeeef2; display: flex; align-items: center; padding: 0 0 5px 13px; font-size: 14.350px; }
.builds div:nth-child(odd) { background: #f8f8f8; }
.builds svg { margin-top: 5px; fill: none; stroke-width: 1.500; }
.builds .ok { stroke: #1ea64b; }
.builds .bad { stroke: #d91a37; }
.builds u { margin-left: 4px; width: 97px; text-underline-offset: 3px; text-decoration-thickness: 1px; }
.builds .d { margin: 0; color: #75757d; width: auto; }
.atom { height: 60px; background: #f3f3f8; display: flex; padding: 11px 0 0 26px; font-size: 14.750px; }
.atom span { margin: 3px 0 0 5px; }

.main { width: 1335px; margin-left: 40px; }
h1 { margin: 34px 0 0 -.500px; font-size: 30.400px; line-height: 54px; height: 54px; font-weight: 700; }
.actions { display: flex; flex-direction: column; align-items: flex-end; height: 128px; padding-top: 32px; font-weight: 500; }
.desc { display: flex; gap: 9px; height: 37px; padding-right: 17px; font-size: 15.350px; align-items: flex-start; }
.desc span { line-height: 38px; }
.desc svg { margin-top: 6px; }
.btn { width: 178px; height: 45px; margin-top: 14px; border-radius: 12px; background: #f5f5fa; font-size: 15.500px; line-height: 47px; text-align: center; }
h2 { margin: 32px 0 0; font-size: 26.800px; line-height: 40px; font-weight: 700; padding-top: 2px; height: 42px; }
.stage { margin-top: 34px; display: flex; }
.runs { width: 298.500px; }
.avg { height: 130px; border-bottom: 3px solid #d0d0d0; background: linear-gradient(#fff 92%, #ececec); display: flex; flex-direction: column; align-items: flex-end; padding: 72px 18px 0 0; font-weight: 300; }
.a1 { font-size: 17.370px; line-height: 26px; }
.a2 { font-size: 17.440px; line-height: 26px; }
.run { height: 106.500px; border: 1px solid #e2e2e2; border-top: 0; display: flex; position: relative; padding: 24px 0 0 29px; }
.run em { position: absolute; left: 9px; top: 9px; width: 34px; height: 22px; border-radius: 11px; background: #8badd1; color: #fff; font-size: 12.700px; font-weight: 700; line-height: 21px; text-align: center; text-shadow: 0 1px 1px rgba(0,0,0,.4); }
.run em.red { background: #d9534f; }
.r1 { height: 101.500px; margin-bottom: 3px; }
.r2 { height: 105px; background: #ffe9e4; border-top: 1px solid #e2e2e2; padding-top: 25px; margin-bottom: 1.500px; }
.r2 em { top: 10px; }
.r3 { height: 105px; background: linear-gradient(#eeeeee, #f1f1f1); border-top: 1px solid #e2e2e2; padding-top: 25px; }
.r3 em { top: 10px; }
.r4 em { width: 31px; left: 10px; top: 10px; }
.card { width: 69px; height: 59px; background: #fff; box-shadow: 0 1px 3px rgba(0,0,0,.3); display: flex; flex-direction: column; align-items: center; font-size: 12.800px; line-height: 29px; padding-top: 1px; margin-left: -1px; }
.nc { width: 68px; height: 59px; background: rgba(0,0,0,.105); border-radius: 0 6px 6px 0; color: #9b9b9b; font-size: 12.900px; line-height: 19px; text-align: center; box-shadow: inset 0 2px 3px rgba(0,0,0,.15); padding-top: 4px; }
.grid { width: 489px; height: 490px; display: flex; border: 1px solid #ececec; border-right: 0; box-shadow: 2px 1px 4px rgba(0,0,0,.25); text-align: center; background: #fff; }
.col { width: 162.300px; border-right: 1px solid #e6e6e6; }
.alt { background: #f6f6f6; }
.th { height: 64px; border-bottom: 2px solid #dedede; font-size: 16.300px; font-weight: 700; line-height: 64px; }
.test { font-size: 15.500px; }
.tm { height: 63px; background: linear-gradient(#f1f1f1 75%, #d4d4d4); font-size: 16.600px; font-weight: 300; line-height: 24px; padding-top: 9px; margin-bottom: 1px; }
.alt .tm { background: linear-gradient(#e9e9e9 75%, #cacaca); }
.prog { position: relative; width: 142px; height: 7px; margin: 5px 0 0 6.500px; background: #e3e3e3; box-shadow: inset 0 0 2px #999; }
.prog i { position: absolute; top: 0; height: 7px; background: linear-gradient(#8cb0dd, #3f78c5); }
.prog s { position: absolute; top: 0; height: 7px; width: 2px; background: #ccc; }
.cell { height: 106.500px; padding: 2px; background: #f0faf0; }
.alt .cell { background: #e6efe6; }
.cell div { height: 103px; border: 1px solid #c8dcc8; border-radius: 5px; background: #e3ffe3; font-size: 16.800px; font-weight: 300; line-height: 84px; color: #5f7562; position: relative; }
.alt .cell .ok { background: #ddf6dd; }
.cell .huge { font-size: 21.800px; color: #1c2b1c; line-height: 85px; }
.cell .big { font-size: 17.500px; }
.cell div.ko, .alt .cell .ko { border: 2px solid #d05255; color: #cd4f51; font-weight: 700; font-size: 17.600px; line-height: 82px; background: repeating-linear-gradient(135deg, #feeae5 0 22.600px, #fdd6d9 22.600px 50.900px, #feeae5 50.900px 56.570px); }
.alt .cell .ko.b { background: repeating-linear-gradient(135deg, #f6e2dd 0 29px, #f6ced1 29px 56.570px); }
.ko small { position: absolute; right: 1px; bottom: 2px; font-size: 12px; line-height: 18px; }
.empty { height: 105px; background: #f1f1f1; border: solid #ddd; border-width: 1px 0; }
.alt .empty { background: #e9e9e9; }

/* taskbar */
.taskbar { height: 60px; flex: none; background: #212121; display: flex; align-items: center; color: #fff; position: relative; }
.wcloud { margin-left: 26px; }
.weather { width: 374px; margin-left: 8px; display: flex; flex-direction: column; font-size: 13.900px; line-height: 20px; }
.w2 { color: #cdcdcd; font-size: 14.300px; }
.start { margin-left: 1px; }
.tsearch { margin-left: 17px; width: 125px; height: 41px; border-radius: 21px; background: #2d2d2d; border: 1px solid #363636; display: flex; align-items: center; gap: 6px; padding-left: 29px; font-size: 14.500px; }
.tsearch svg { fill: none; stroke: #eee; stroke-width: 1.800; }
.apps { display: flex; margin-left: 3.500px; height: 60px; }
.apps > div { width: 55px; height: 60px; display: grid; place-items: center; position: relative; }
.apps > div > i { position: absolute; left: 23px; bottom: 4px; width: 8px; height: 4px; border-radius: 2px; background: #9a9a9a; }
.apps > .cur { width: 50px; height: 51px; margin: 5px 2.500px; background: #2e2e2e; border-radius: 5px; outline: 1px solid #363636; }
.apps > .cur > i { left: 15px; width: 20px; bottom: 0; background: #4cc2ff; }
.ya.t { width: 30px; height: 30px; background: #fc3133; line-height: 29px; font-size: 21px; font-weight: 600; }
.mr { width: 29px; height: 30px; border: 2px solid #0c0c0c; border-radius: 4px; background: linear-gradient(#555, #111 50%); font: 700 18px/25px "Liberation Sans", sans-serif; color: #ddd; letter-spacing: -1px; }
.mr b { color: #1b59f0; font-size: 14px; }
.tray { position: relative; margin-left: 41px; display: flex; align-items: center; height: 60px; }
.w { fill: none; stroke: #f0f0f0; stroke-width: 1.500; }
.sync { margin-left: 11px; }
.mic { margin-left: 16px; fill: none; stroke: #9fe3f2; stroke-width: 1.500; }
.eng { margin-left: 25px; font-size: 14.450px; width: 30px; }
.wifi { margin-left: 22px; }
.vol { margin-left: 9px; }
.bat { margin-left: 9px; }
.clock { margin-left: 18px; width: 73px; display: flex; flex-direction: column; align-items: flex-end; font-size: 14px; line-height: 20px; }
.clock .c1 { font-size: 13.400px; }
.six { margin-left: 9px; width: 20px; height: 20px; border-radius: 50%; background: #4cc2ff; color: #111; font-size: 12.500px; line-height: 20px; text-align: center; }
```
